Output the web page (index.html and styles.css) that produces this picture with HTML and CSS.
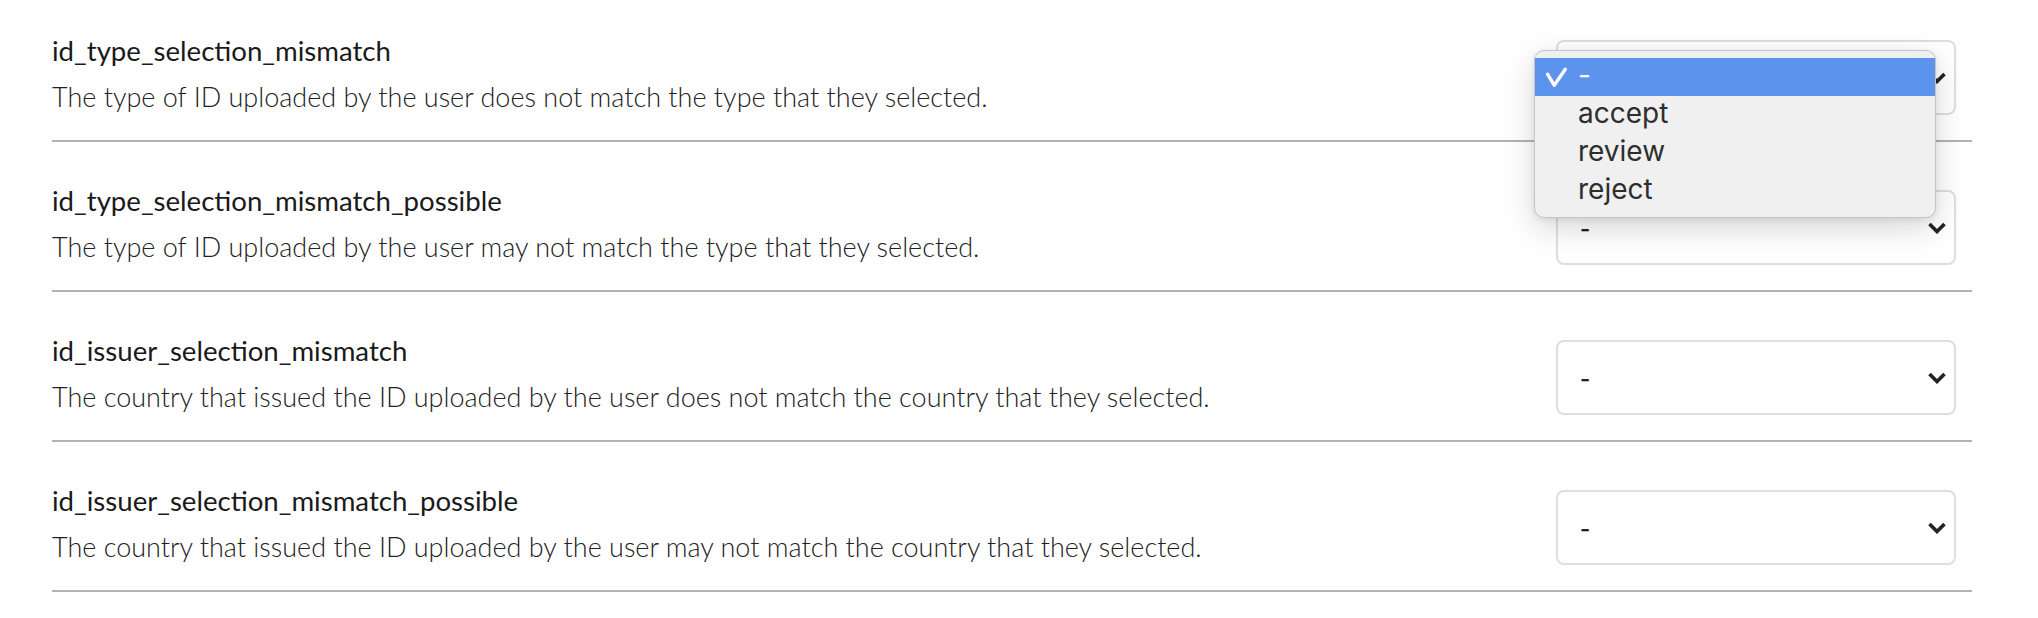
FILE: index.html
```html
<!DOCTYPE html>
<html lang="en">
<head>
<meta charset="utf-8">
<title>Rules</title>
<link rel="stylesheet" href="styles.css">
</head>
<body>
<div class="list">
  <div class="row">
    <div class="info">
      <div class="name">id_type_selection_mismatch</div>
      <div class="desc">The type of ID uploaded by the user does not match the type that they selected.</div>
    </div>
    <div class="select">
      <span class="value">-</span>
      <svg class="chev" width="18" height="12" viewBox="0 0 18 12"><polyline points="1.5,2 9,9.5 16.5,2" fill="none" stroke="#222" stroke-width="3.6"/></svg>
      <div class="menu">
        <div class="item selected">
          <span class="check"><svg width="24" height="22" viewBox="0 0 24 22"><polyline points="2.7,7.3 9.3,18.3 20.3,2.3" fill="none" stroke="#fff" stroke-width="3.4" stroke-linecap="round" stroke-linejoin="round"/></svg></span>
          <span class="label">-</span>
        </div>
        <div class="item"><span class="check"></span><span class="label">accept</span></div>
        <div class="item"><span class="check"></span><span class="label">review</span></div>
        <div class="item"><span class="check"></span><span class="label">reject</span></div>
      </div>
    </div>
  </div>
  <div class="row">
    <div class="info">
      <div class="name">id_type_selection_mismatch_possible</div>
      <div class="desc">The type of ID uploaded by the user may not match the type that they selected.</div>
    </div>
    <div class="select">
      <span class="value">-</span>
      <svg class="chev" width="18" height="12" viewBox="0 0 18 12"><polyline points="1.5,2 9,9.5 16.5,2" fill="none" stroke="#222" stroke-width="3.6"/></svg>
    </div>
  </div>
  <div class="row">
    <div class="info">
      <div class="name">id_issuer_selection_mismatch</div>
      <div class="desc">The country that issued the ID uploaded by the user does not match the country that they selected.</div>
    </div>
    <div class="select">
      <span class="value">-</span>
      <svg class="chev" width="18" height="12" viewBox="0 0 18 12"><polyline points="1.5,2 9,9.5 16.5,2" fill="none" stroke="#222" stroke-width="3.6"/></svg>
    </div>
  </div>
  <div class="row">
    <div class="info">
      <div class="name">id_issuer_selection_mismatch_possible</div>
      <div class="desc">The country that issued the ID uploaded by the user may not match the country that they selected.</div>
    </div>
    <div class="select">
      <span class="value">-</span>
      <svg class="chev" width="18" height="12" viewBox="0 0 18 12"><polyline points="1.5,2 9,9.5 16.5,2" fill="none" stroke="#222" stroke-width="3.6"/></svg>
    </div>
  </div>
</div>
</body>
</html>
```
FILE: styles.css
```css
html, body {
  margin: 0;
  padding: 0;
  background: #ffffff;
}

.list {
  margin: -8px 0 0 52px;
  width: 1920px;
}

.row {
  display: flex;
  justify-content: space-between;
  align-items: flex-end;
  padding: 42px 16px 26px 0;
  border-bottom: 2px solid #b3b3b3;
}

.name {
  font-family: Lato, "Liberation Sans", sans-serif;
  font-weight: 400;
  font-size: 27.6px;
  line-height: 34px;
  color: #1a1a1a;
}

.desc {
  font-family: Lato, "Liberation Sans", sans-serif;
  font-weight: 300;
  font-size: 27px;
  line-height: 34px;
  margin-top: 12px;
  color: #222222;
}

.select {
  position: relative;
  box-sizing: border-box;
  width: 400px;
  height: 75px;
  margin-bottom: -1px;
  border: 2px solid #dedede;
  border-radius: 8px;
  background: #ffffff;
  display: flex;
  align-items: center;
  justify-content: space-between;
  padding: 0 8px 0 22px;
}

.value {
  font-family: Inter, "Liberation Sans", sans-serif;
  font-weight: 600;
  font-size: 22px;
  color: #222222;
  margin-top: 3px;
}

.chev {
  display: block;
}

.menu {
  position: absolute;
  z-index: 10;
  left: -24px;
  top: 8px;
  box-sizing: border-box;
  width: 402px;
  padding: 7px 0;
  background: #f0f0f0;
  border: 1px solid #c4c4c4;
  border-radius: 10px;
  box-shadow: 0 10px 32px rgba(0, 0, 0, 0.16), 0 2px 6px rgba(0, 0, 0, 0.08);
}

.item {
  display: flex;
  align-items: flex-start;
  height: 38px;
  padding-left: 10px;
  font-family: Inter, "Liberation Sans", sans-serif;
  font-size: 28px;
  color: #2e2e2e;
}

.item.selected {
  background: #5c93ec;
  color: #ffffff;
}

.check {
  width: 33px;
  height: 38px;
  flex: none;
}

.check svg {
  display: block;
  margin-top: 9px;
}

.label {
  line-height: 34px;
}
```
